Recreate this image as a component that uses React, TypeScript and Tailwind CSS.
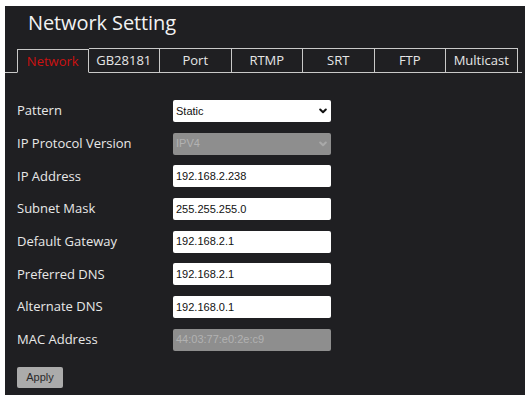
import React from 'react';

const tabs = ['Network', 'GB28181', 'Port', 'RTMP', 'SRT', 'FTP', 'Multicast'];

type Field = { label: string; value: string; kind: 'select' | 'input'; disabled?: boolean };

const fields: Field[] = [
  { label: 'Pattern', value: 'Static', kind: 'select' },
  { label: 'IP Protocol Version', value: 'IPV4', kind: 'select', disabled: true },
  { label: 'IP Address', value: '192.168.2.238', kind: 'input' },
  { label: 'Subnet Mask', value: '255.255.255.0', kind: 'input' },
  { label: 'Default Gateway', value: '192.168.2.1', kind: 'input' },
  { label: 'Preferred DNS', value: '192.168.2.1', kind: 'input' },
  { label: 'Alternate DNS', value: '192.168.0.1', kind: 'input' },
  { label: 'MAC Address', value: '44:03:77:e0:2e:c9', kind: 'input', disabled: true },
];

const Chevron = ({ disabled }: { disabled?: boolean }) => (
  <svg width="8" height="6" viewBox="0 0 8 6" className="shrink-0">
    <path
      d="M1.2 1.5 L4 4.3 L6.8 1.5"
      fill="none"
      stroke={disabled ? '#a9a9a9' : '#111'}
      strokeWidth="2"
      strokeLinecap="round"
      strokeLinejoin="round"
    />
  </svg>
);

const Control = ({ f }: { f: Field }) => {
  const base = 'w-[158px] h-[22px] rounded-[2px] flex items-center pl-[3px] pr-[4px] text-[11px] font-["Liberation_Sans",Arial,sans-serif]';
  const tone = f.disabled ? 'bg-[#8e8e8e] text-[#b2b2b2]' : 'bg-white text-[#111]';
  return (
    <div className={`${base} ${tone}`}>
      <span className="flex-1 leading-none">{f.value}</span>
      {f.kind === 'select' && <Chevron disabled={f.disabled} />}
    </div>
  );
};

export default function App() {
  return (
    <div className="w-[529px] h-[400px] bg-white pl-[5px] pt-[6px] font-['Open_Sans','Noto_Sans',sans-serif]">
      <div className="w-[520px] h-[389px] bg-[#1f1f22] flex flex-col">
        <h1 className="pl-[23px] pt-[3px] text-[20px] leading-[28px] text-[#f2f2f2] tracking-[-0.1px]">
          Network Setting
        </h1>

        {/* tab strip */}
        <div className="mt-[11px] flex items-end pl-[12px] border-b border-[#c9c9c9] mr-[3px]">
          {tabs.map((t, i) => (
            <div
              key={t}
              className={`w-[71.5px] -mb-px flex items-center justify-center text-[13px] border-t border-r border-[#c9c9c9] ${
                i === 0
                  ? 'h-[24px] border-l text-[#cc1111] border-b border-b-[#1f1f22] pt-px'
                  : 'h-[25px] text-[#e6e6e6]'
              }`}
            >
              {t}
            </div>
          ))}
        </div>

        <div className="pl-[12px] pt-[27px] flex flex-col gap-[10.7px]">
          {fields.map(f => (
            <div key={f.label} className="flex items-center h-[22px]">
              <div className="w-[156px] text-[13px] text-[#e8e8e8]">{f.label}</div>
              <Control f={f} />
            </div>
          ))}
        </div>

        <div className="pl-[12px] mt-[12px]">
          <button className="w-[46px] h-[21px] rounded-[2px] bg-[#ababab] text-[11px] text-[#2a2a2a] font-['Liberation_Sans',Arial,sans-serif]">
            Apply
          </button>
        </div>
      </div>
    </div>
  );
}
